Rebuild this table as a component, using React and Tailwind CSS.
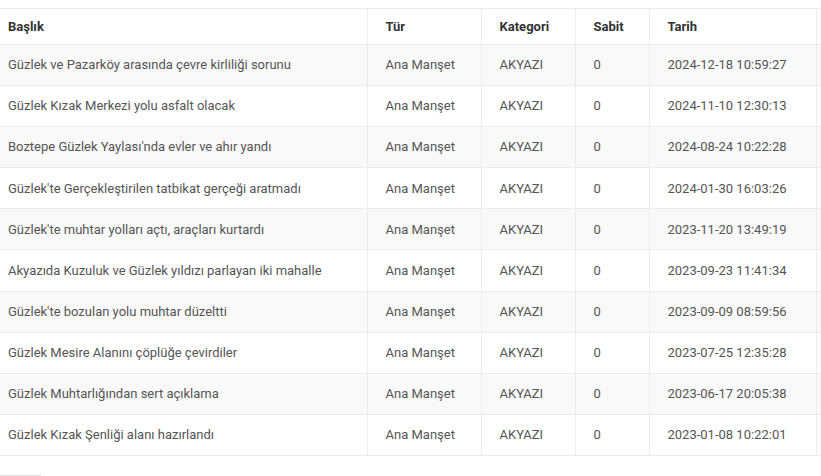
import React from 'react';

const rows = [
  ['Güzlek ve Pazarköy arasında çevre kirliliği sorunu', '2024-12-18 10:59:27'],
  ['Güzlek Kızak Merkezi yolu asfalt olacak', '2024-11-10 12:30:13'],
  ["Boztepe Güzlek Yaylası'nda evler ve ahır yandı", '2024-08-24 10:22:28'],
  ["Güzlek'te Gerçekleştirilen tatbikat gerçeği aratmadı", '2024-01-30 16:03:26'],
  ["Güzlek'te muhtar yolları açtı, araçları kurtardı", '2023-11-20 13:49:19'],
  ['Akyazıda Kuzuluk ve Güzlek yıldızı parlayan iki mahalle', '2023-09-23 11:41:34'],
  ["Güzlek'te bozulan yolu muhtar düzeltti", '2023-09-09 08:59:56'],
  ['Güzlek Mesire Alanını çöplüğe çevirdiler', '2023-07-25 12:35:28'],
  ['Güzlek Muhtarlığından sert açıklama', '2023-06-17 20:05:38'],
  ['Güzlek Kızak Şenliği alanı hazırlandı', '2023-01-08 10:22:01'],
];

function App() {
  return (
    <div className="h-[476px] bg-white overflow-hidden pt-2" style={{ fontFamily: 'Roboto, "Noto Sans", sans-serif' }}>
      <table className="border-collapse table-fixed w-[900px] text-[13px]">
        <colgroup>
          <col className="w-[367px]" />
          <col className="w-[114px]" />
          <col className="w-[94px]" />
          <col className="w-[74px]" />
          <col className="w-[167px]" />
          <col className="w-[84px]" />
        </colgroup>
        <thead>
          <tr className="h-[36px] border-t border-b border-[#ececec] text-[#333] font-bold">
            <th className="text-left pl-2 font-bold">Başlık</th>
            <th className="text-left pl-[18px] border-l border-[#ececec] font-bold">Tür</th>
            <th className="text-left pl-[18px] border-l border-[#ececec] font-bold">Kategori</th>
            <th className="text-left pl-[18px] border-l border-[#ececec] font-bold">Sabit</th>
            <th className="text-left pl-[18px] border-l border-[#ececec] font-bold">Tarih</th>
            <th className="border-l border-[#ececec]"></th>
          </tr>
        </thead>
        <tbody className="text-[#555]">
          {rows.map((r, i) => (
            <tr key={i} className={`h-[41.1px] border-b border-[#ececec] ${i % 2 === 0 ? 'bg-[#f9f9f9]' : 'bg-white'}`}>
              <td className="pl-2 whitespace-nowrap">{r[0]}</td>
              <td className="pl-[18px] border-l border-[#ececec]">Ana Manşet</td>
              <td className="pl-[18px] border-l border-[#ececec]">AKYAZI</td>
              <td className="pl-[18px] border-l border-[#ececec]">0</td>
              <td className="pl-[18px] border-l border-[#ececec]">{r[1]}</td>
              <td className="border-l border-[#ececec]"></td>
            </tr>
          ))}
        </tbody>
      </table>
      <div className="mt-[19px] flex">
        <div className="w-[16px] h-[30px] border-t border-r border-[#ddd]"></div>
        <div className="w-[25px] h-[30px] border-t border-r border-[#ddd]"></div>
      </div>
    </div>
  );
}

export default App;
